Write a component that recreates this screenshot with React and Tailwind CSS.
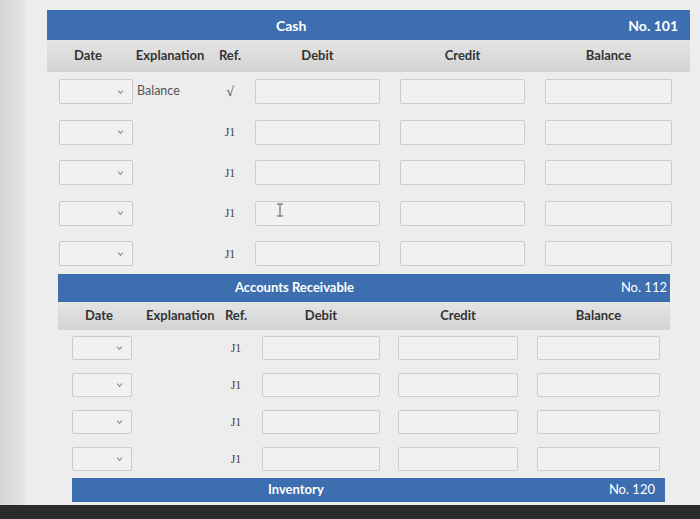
import React from 'react';

const font = { fontFamily: 'Lato, "Open Sans", Arial, sans-serif' };
const refFont = { fontFamily: '"Liberation Serif", serif' };

function Select({ className }) {
  return (
    <div className={`relative h-full border border-[#cbcbcb] rounded-[2px] bg-[#f1f1f1] ${className}`}>
      <svg className="absolute right-[8px] top-1/2 -translate-y-1/2" width="7" height="5" viewBox="0 0 7 5">
        <path d="M1 1 L3.5 3.8 L6 1" fill="none" stroke="#8a8a8a" strokeWidth="1.1" />
      </svg>
    </div>
  );
}

function Box({ className, children }) {
  return (
    <div className={`relative h-full border border-[#cdcdcd] rounded-[2px] bg-[#f1f1f1] ${className}`}>{children}</div>
  );
}

function Cursor() {
  return (
    <svg className="absolute left-[20px] top-[1px]" width="8" height="14" viewBox="0 0 8 14">
      <path d="M1 1 H7 M4 1 V13 M1 13 H7" fill="none" stroke="#555" strokeWidth="1" />
    </svg>
  );
}

export default function App() {
  const cashRows = [
    { expl: 'Balance', ref: '√' },
    { ref: 'J1' },
    { ref: 'J1' },
    { ref: 'J1', cursor: true },
    { ref: 'J1' },
  ];

  return (
    <div className="flex w-[700px] h-[519px] overflow-hidden bg-[#ededed]" style={font}>
      <div className="w-[26px] h-full bg-gradient-to-r from-[#d6d6d6] to-[#e6e6e6] shrink-0" />
      <div className="flex flex-col flex-1 relative">
        <div className="flex flex-col flex-1 pt-[10px] -ml-[26px]">
          {/* Cash */}
          <div className="ml-[47px] w-[643px]">
            <div className="h-[30px] bg-[#3c6eb0] flex items-center justify-between text-white font-bold text-[14px]">
              <span className="ml-[229px]">Cash</span>
              <span className="mr-[12px]">No. 101</span>
            </div>
            <div className="h-[32px] grid grid-cols-[88px_70px_50px_145px_145px_145px] items-center bg-gradient-to-b from-[#e4e4e4] to-[#d3d3d3] text-[13px] font-bold text-[#333]">
              <span className="text-center pr-[6px]">Date</span>
              <span className="text-center">Explanation</span>
              <span className="text-center">Ref.</span>
              <span className="w-[125px] text-center">Debit</span>
              <span className="w-[125px] text-center">Credit</span>
              <span className="w-[127px] text-center">Balance</span>
            </div>
            <div className="flex flex-col gap-[15.5px] pt-[7px]">
              {cashRows.map((r, i) => (
                <div key={i} className="h-[25px] grid grid-cols-[88px_70px_50px_145px_145px_145px] items-center">
                  <Select className="ml-[12px] w-[74px]" />
                  <span className="pl-[2px] text-[12.5px] text-[#555]">{r.expl || ''}</span>
                  <span className={`text-center text-[#444] ${i === 0 ? 'text-[14px]' : 'text-[12px]'}`} style={refFont}>{r.ref}</span>
                  <Box className="w-[125px]">{r.cursor && <Cursor />}</Box>
                  <Box className="w-[125px]" />
                  <Box className="w-[127px]" />
                </div>
              ))}
            </div>
          </div>

          {/* Accounts Receivable */}
          <div className="ml-[58px] w-[612px] mt-[8px]">
            <div className="h-[28px] bg-[#3c6eb0] flex items-center justify-between text-white font-bold text-[13px]">
              <span className="ml-[177px]">Accounts Receivable</span>
              <span className="mr-[3px] font-normal">No. 112</span>
            </div>
            <div className="h-[28px] grid grid-cols-[88px_68px_44px_138px_138px_136px] items-center bg-gradient-to-b from-[#e4e4e4] to-[#d3d3d3] text-[13px] font-bold text-[#333]">
              <span className="text-center pr-[6px]">Date</span>
              <span className="text-center">Explanation</span>
              <span className="text-center">Ref.</span>
              <span className="ml-[4px] w-[118px] text-center">Debit</span>
              <span className="ml-[2px] w-[120px] text-center">Credit</span>
              <span className="ml-[3px] w-[123px] text-center">Balance</span>
            </div>
            <div className="flex flex-col gap-[13px] pt-[6px]">
              {[0, 1, 2, 3].map((i) => (
                <div key={i} className="h-[24px] grid grid-cols-[88px_68px_44px_138px_138px_136px] items-center">
                  <Select className="ml-[14px] w-[60px]" />
                  <span />
                  <span className="text-center text-[12px] text-[#444]" style={refFont}>J1</span>
                  <Box className="ml-[4px] w-[118px]" />
                  <Box className="ml-[2px] w-[120px]" />
                  <Box className="ml-[3px] w-[123px]" />
                </div>
              ))}
            </div>
          </div>

          {/* Inventory */}
          <div className="ml-[72px] w-[593px] mt-[7px]">
            <div className="h-[24px] bg-[#3c6eb0] flex items-center justify-between text-white font-bold text-[13px]">
              <span className="ml-[196px]">Inventory</span>
              <span className="mr-[10px] font-normal">No. 120</span>
            </div>
          </div>
          <div className="mt-[3px] h-[14px] bg-[#2b2b2b] w-[700px]" />
        </div>
      </div>
    </div>
  );
}
